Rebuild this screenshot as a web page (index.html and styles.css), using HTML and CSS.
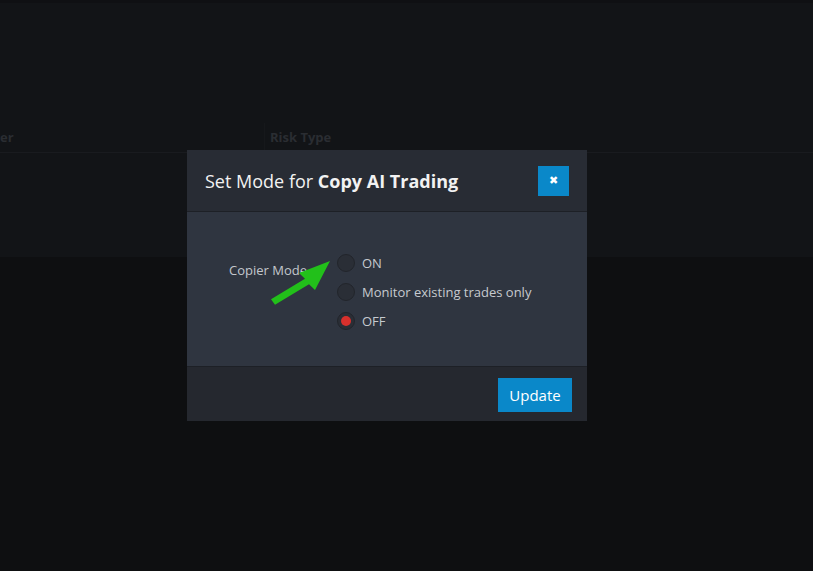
FILE: index.html
```html
<!DOCTYPE html>
<html lang="en">
<head>
    <meta charset="UTF-8">
    <meta name="viewport" content="width=device-width, initial-scale=1.0">
    <title>Set Mode</title>
    <link rel="stylesheet" href="styles.css">
</head>
<body>
    <div class="page">
        <div class="top-strip"></div>
        <div class="panel">
            <div class="table-head">
                <div class="th th-first">er</div>
                <div class="th">Risk Type</div>
            </div>
        </div>
    </div>

    <div class="modal">
        <div class="modal-header">
            <h2>Set Mode for <strong>Copy AI Trading</strong></h2>
            <button class="close-btn">&#x2716;</button>
        </div>
        <div class="modal-body">
            <div class="form-row">
                <label class="field-label">Copier Mode</label>
                <div class="radio-list">
                    <label class="radio"><span class="dot"></span>ON</label>
                    <label class="radio"><span class="dot"></span>Monitor existing trades only</label>
                    <label class="radio"><span class="dot checked"></span>OFF</label>
                </div>
            </div>
        </div>
        <div class="modal-footer">
            <button class="update-btn">Update</button>
        </div>
    </div>

    <svg class="arrow" width="80" height="55" viewBox="0 0 80 55">
        <polygon points="70,6 39,18 45,23.7 11,44.2 15,49.8 49,29.3 55,35" fill="#22c01a"/>
    </svg>
</body>
</html>
```

FILE: styles.css
```css
* {
    margin: 0;
    padding: 0;
    box-sizing: border-box;
}

body {
    font-family: 'Open Sans', 'Liberation Sans', sans-serif;
    background: #0e0f11;
    width: 813px;
    height: 571px;
    overflow: hidden;
    position: relative;
}

.top-strip {
    height: 3px;
    background: #0f1013;
}

.panel {
    height: 254px;
    background: #121417;
    padding-top: 120px;
}

.table-head {
    display: flex;
    height: 30px;
    border-bottom: 1px solid #191b1f;
}

.th {
    font-size: 13px;
    font-weight: bold;
    color: #2a2d32;
    line-height: 29px;
    padding-left: 5px;
    border-left: 1px solid #16181b;
}

.th-first {
    width: 264px;
    padding-left: 0;
    border-left: none;
}

.modal {
    position: absolute;
    left: 187px;
    top: 150px;
    width: 400px;
    height: 271px;
    display: flex;
    flex-direction: column;
}

.modal-header {
    height: 62px;
    background: #282c34;
    border-bottom: 1px solid #1d2026;
    display: flex;
    align-items: center;
    justify-content: space-between;
    padding: 0 18px;
}

.modal-header h2 {
    font-size: 18px;
    font-weight: normal;
    color: #f2f2f2;
}

.modal-header strong {
    font-weight: bold;
}

.close-btn {
    width: 31px;
    height: 30px;
    background: #0a88c9;
    border: none;
    color: #fff;
    font-size: 11px;
    font-family: 'DejaVu Sans', sans-serif;
}

.modal-body {
    height: 155px;
    background: #2f3540;
    border-bottom: 1px solid #1d2026;
    padding-top: 42px;
}

.form-row {
    display: flex;
    padding-left: 42px;
}

.field-label {
    width: 108px;
    font-size: 13px;
    color: #c3c7cd;
    padding-top: 7px;
}

.radio-list {
    display: flex;
    flex-direction: column;
    gap: 11px;
}

.radio {
    display: flex;
    align-items: center;
    gap: 7px;
    font-size: 13px;
    color: #c6cacf;
    height: 18px;
}

.dot {
    width: 18px;
    height: 18px;
    border-radius: 50%;
    background: #2a2e36;
    border: 1px solid #22252b;
    display: flex;
    align-items: center;
    justify-content: center;
}

.dot.checked::after {
    content: '';
    width: 10px;
    height: 10px;
    border-radius: 50%;
    background: #d8302c;
}

.modal-footer {
    flex: 1;
    background: #25282f;
    display: flex;
    justify-content: flex-end;
    align-items: flex-start;
    padding: 11px 15px 0 0;
}

.update-btn {
    width: 74px;
    height: 34px;
    background: #0a88c9;
    border: none;
    color: #fff;
    font-family: 'Open Sans', 'Liberation Sans', sans-serif;
    font-size: 15px;
}

.arrow {
    position: absolute;
    left: 260px;
    top: 255px;
}
```
